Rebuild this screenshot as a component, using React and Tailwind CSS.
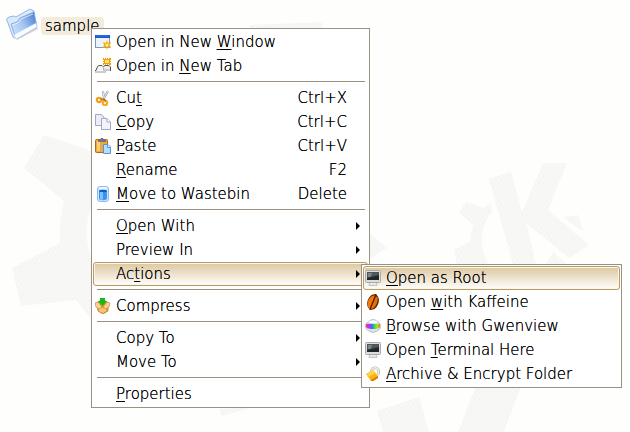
import React from "react";

const menuItems = [
  { label: "Open in New Window", key: 12, icon: WindowIcon },
  { label: "Open in New Tab", key: 8, icon: TabIcon },
  { separator: true },
  { label: "Cut", key: 2, icon: CutIcon, shortcut: "Ctrl+X" },
  { label: "Copy", key: 0, icon: CopyIcon, shortcut: "Ctrl+C" },
  { label: "Paste", key: 0, icon: PasteIcon, shortcut: "Ctrl+V" },
  { label: "Rename", key: 0, shortcut: "F2" },
  { label: "Move to Wastebin", key: 0, icon: WastebinIcon, shortcut: "Delete" },
  { separator: true },
  { label: "Open With", key: 0, submenu: true },
  { label: "Preview In", submenu: true },
  {
    label: "Actions",
    key: 2,
    submenu: true,
    active: true,
    items: [
      { label: "Open as Root", key: 0, icon: TerminalIcon, active: true },
      { label: "Open with Kaffeine", key: 5, icon: BeanIcon },
      { label: "Browse with Gwenview", key: 0, icon: GwenviewIcon },
      { label: "Open Terminal Here", key: 5, icon: TerminalIcon },
      { label: "Archive & Encrypt Folder", key: 0, icon: LockIcon },
    ],
  },
  { separator: true },
  { label: "Compress", icon: CompressIcon, submenu: true },
  { separator: true },
  { label: "Copy To", submenu: true },
  { label: "Move To", submenu: true },
  { separator: true },
  { label: "Properties", key: 0 },
];

function Label({ text, index }) {
  if (index === undefined) return <span>{text}</span>;
  return (
    <span>
      {text.slice(0, index)}
      <span className="underline decoration-1 underline-offset-2">{text[index]}</span>
      {text.slice(index + 1)}
    </span>
  );
}

function MenuItem({ item }) {
  if (item.separator) {
    return <li role="separator" className="h-2 pt-[3px] pl-1 pr-[3px]"><div className="h-px bg-[#9c9083]" /></li>;
  }
  const Icon = item.icon;
  return (
    <li className="relative">
      <button
        type="button"
        role="menuitem"
        className={
          item.active
            ? "flex h-6 w-full items-center rounded-[3px] border border-[#b89c64] bg-linear-to-b from-[#dcc7a0] to-[#fffefc] pl-px text-left shadow-[inset_0_0_0_1px_#fbf6ec] [text-shadow:0_0_0_#000]"
            : "flex h-6 w-full items-center border border-transparent pl-px text-left [text-shadow:0_0_0_#000]"
        }
      >
        <span className="mr-[5px] h-4 w-4 shrink-0">{Icon && <Icon />}</span>
        <span className="flex-1"><Label text={item.label} index={item.key} /></span>
        {item.shortcut && <span className="mr-5">{item.shortcut}</span>}
        {item.submenu && (
          <svg className="mr-[7px] h-2 w-1" viewBox="0 0 4 8" aria-hidden="true"><path d="M0 0 4 4 0 8Z" /></svg>
        )}
      </button>
      {item.items && <Menu items={item.items} className="absolute top-[2px] left-[268px] z-10 w-[261px]" />}
    </li>
  );
}

function Menu({ items, className }) {
  return (
    <ul role="menu" className={`border border-[#9c9083] bg-white p-px ${className}`}>
      {items.map((item, i) => <MenuItem key={i} item={item} />)}
    </ul>
  );
}

// faint gear artwork behind the icons
function Wallpaper() {
  return (
    <svg className="absolute top-0 left-0 h-[432px] w-[630px]" viewBox="0 0 630 432" aria-hidden="true">
      <defs>
        <pattern id="grain" width="8" height="8" patternUnits="userSpaceOnUse">
          <rect width="8" height="8" fill="#f6f6f5" />
          <path d="M1 1h1v1H1zM5 0h1v1H5zM3 4h1v1H3zM7 3h1v1H7zM0 6h1v1H0zM5 6h1v1H5z" fill="#fefefd" />
        </pattern>
      </defs>
      <g fill="url(#grain)">
        <path d="M44 135 95 152V200Q78 232 95 266V324L76 300 21 306 12 268 60 243Q59 222 64 201L24 168Z" />
        <path d="M250 25 322 22V30H250ZM368 232 387 248 368 260Z" />
        <path d="M489 179 511 172 522 212 543 163H567L548 210 589 245 569 258 526 223 537 268H514Z" />
        <path d="M466 202 484 208 490 203 492 211Q473 236 489 266H457L454 250 471 241Q470 232 474 226L459 213Z" />
        <path d="M563 217 578 215 583 230H580ZM553 252 569 266H545Z" />
        <path d="M219 409 222 416 254 407ZM377 411 419 397 429 432H383ZM476 386H521L504 432H458Z" />
      </g>
    </svg>
  );
}

function FolderIcon() {
  return (
    <svg className="h-8 w-8" viewBox="0 0 32 32" aria-hidden="true">
      <defs>
        <linearGradient id="folder" x1="0" y1=".8" x2="1" y2=".2">
          <stop stopColor="#cfe4fd" /><stop offset=".5" stopColor="#a3c6f2" /><stop offset="1" stopColor="#4f80d2" />
        </linearGradient>
      </defs>
      <path d="M11 32 32 21 30 17 10 28Z" fill="#999" opacity=".4" />
      <path d="M.5 11 3 9 8 8 10 9 24 1 28 3 28 6 9 30 7 29Z" fill="#d9eafd" stroke="#7fa4da" strokeWidth=".8" />
      <path d="M5 16 11 14 14 10 28 4 31 19 10 31Z" fill="url(#folder)" stroke="#7da3dc" strokeWidth=".8" />
      <path d="M8 27 30 15 31 19 10 31Z" fill="#f8fbff" />
      <path d="M6 17 12 15 15 11 27 6" fill="none" stroke="#eaf4ff" strokeWidth=".8" />
    </svg>
  );
}

function WindowIcon() {
  return (
    <svg viewBox="0 0 16 16" aria-hidden="true">
      <rect x=".5" y="1.5" width="14" height="12" fill="#eef2fa" stroke="#7f95c4" />
      <path d="M0 1h15v3H0z" fill="#1759d0" />
      <path d="M1 2h13" stroke="#4b8bf0" strokeWidth=".6" />
      <path d="m12 6 1 3 3-1-1 3 1 3-3-1-1 3-1-3-3 1 1-3-1-3 3 1Z" fill="#f5ae13" />
      <circle cx="12" cy="11" r="1.5" fill="#fff08a" />
    </svg>
  );
}

function TabIcon() {
  return (
    <svg viewBox="0 0 16 16" aria-hidden="true">
      <path d="M8 0h1v1h1V0h1v1h1V0h1v1h1V0h2v2h-1v1h1v1h-1v1h1v2h-2V6h-1v1h-1V6h-1v1h-1V6H9v1H8V5h1V4H8V3h1V2H8Z" fill="#f39c0b" />
      <path d="M10 2h4v3h-4z" fill="#ffe65c" />
      <path d="M0 12.500H1L2.500 8.500 4 7.500H7L9 9.500V12.500H16V11" fill="#f4f4f4" stroke="#555" />
      <path d="M8.500 8.500 10 7.500H14L15.500 9V12H9" fill="#eee" stroke="#555" />
      <path d="M0 13H9V11H15V13H11V15H0Z" fill="#ccc" />
    </svg>
  );
}

function CutIcon() {
  return (
    <svg viewBox="0 0 16 16" fill="none" aria-hidden="true">
      <path d="M8 1 9 9M13 1 8 10" stroke="#8d98aa" strokeWidth="2" />
      <path d="M8 1 9 8M13 1 9 8" stroke="#e3e8f0" />
      <circle cx="4" cy="10" r="2.200" stroke="#f0a020" strokeWidth="2.200" />
      <circle cx="10" cy="13" r="2.200" stroke="#f5ae2a" strokeWidth="2.200" />
      <path d="m6 9 4 1 1 1" stroke="#c16b09" strokeWidth="1.500" />
    </svg>
  );
}

function CopyIcon() {
  return (
    <svg viewBox="0 0 16 16" stroke="#a5a5c6" aria-hidden="true">
      <path d="M.5.5H6L9 3V11.500H.5Z" fill="#ececf6" />
      <path d="M6.500 4.500H12L15.500 8V15.500H6.500Z" fill="#f3f3fb" />
      <path d="M12 4.500V8H15.500" fill="#fff" />
    </svg>
  );
}

function PasteIcon() {
  return (
    <svg viewBox="0 0 16 16" aria-hidden="true">
      <rect x=".5" y="1.500" width="12" height="13" rx="1" fill="#efa63a" stroke="#b2690f" />
      <path d="M2 3H5V13H2Z" fill="#ffd07b" />
      <path d="M3 2H5L6 0H8L9 2H11V4H3Z" fill="#68758b" />
      <path d="M8.500 6.500H13L15.500 9V15.500H8.500Z" fill="#b5dcff" stroke="#5794d8" />
      <path d="M12.500 6.500V9.500H15.500" fill="#e9f6ff" stroke="#5794d8" />
    </svg>
  );
}

function WastebinIcon() {
  return (
    <svg viewBox="0 0 16 16" aria-hidden="true">
      <rect x="2.500" y=".5" width="11" height="15" rx="2.500" fill="#c9e8ff" stroke="#8dbce8" />
      <path d="M4 5H12V13Q8 15.500 4 13Z" fill="#3a92f2" />
      <ellipse cx="8" cy="5" rx="4" ry="1.200" fill="#1458c9" />
      <ellipse cx="8" cy="2" rx="4" ry="1" fill="#f3fbff" />
      <path d="M5 6H8V14L5 13Z" fill="#7cc2ff" />
    </svg>
  );
}

function CompressIcon() {
  return (
    <svg viewBox="0 0 16 16" aria-hidden="true">
      <path d="M2 5 4 3H11L13 5V13L8 16 3 13Z" fill="#e3a04a" stroke="#a9742d" strokeWidth=".7" />
      <path d="M0 5 3 4 7 9 4 11 1 9ZM15 5 12 4 8 9 11 11 14 9Z" fill="#ffd18a" stroke="#b57b30" strokeWidth=".6" />
      <path d="M4 11 7 10 11 11V13L8 15 4 13Z" fill="#ffc56d" />
      <path d="M5 0H10V3H12L7.500 8 3 3H5Z" fill="#16b817" />
    </svg>
  );
}

function TerminalIcon() {
  return (
    <svg viewBox="0 0 16 16" aria-hidden="true">
      <path d="M4 14 6 12H10L12 14V15.500H4Z" fill="#e8e8e8" stroke="#aaa" strokeWidth=".6" />
      <rect x=".5" y=".5" width="15" height="12" rx="1" fill="#ddd" stroke="#aaa" />
      <path d="M2 2H14V10H2Z" fill="#20282a" />
      <path d="M2 2H14V5L2 8Z" fill="#4d5759" />
      <path d="M3 4H7M3 6H6" stroke="#cdd4d4" strokeWidth=".7" />
    </svg>
  );
}

function BeanIcon() {
  return (
    <svg viewBox="0 0 16 16" aria-hidden="true">
      <ellipse cx="8" cy="8" rx="5.500" ry="8" fill="#622200" transform="rotate(20 8 8)" />
      <ellipse cx="7.500" cy="8" rx="4.500" ry="7" fill="#ee7a08" transform="rotate(22 7 8)" />
      <path d="M11 0Q9 6 8 8T5 16" fill="none" stroke="#5d2100" strokeWidth="1.500" />
      <path d="M12 3Q12 8 8 13" fill="none" stroke="#e36c08" strokeWidth="1.500" />
    </svg>
  );
}

function GwenviewIcon() {
  return (
    <svg viewBox="0 0 16 16" aria-hidden="true">
      <defs>
        <linearGradient id="spectrum">
          <stop stopColor="#ef3b8a" /><stop offset=".25" stopColor="#c02cf4" /><stop offset=".42" stopColor="#2f6fff" />
          <stop offset=".6" stopColor="#27dd55" /><stop offset=".8" stopColor="#a4ec23" /><stop offset="1" stopColor="#ff642b" />
        </linearGradient>
      </defs>
      <path d="M0 8Q1 5 3 4 8-1 13 4 15 5 16 8 15 12 12 13 8 16 4 13 1 12 0 8Z" fill="#dfe2e8" stroke="#a3a8b2" strokeWidth=".7" />
      <path d="M1 6Q8 5 15 6V9Q13 11 8 11T1 9Z" fill="url(#spectrum)" />
      <ellipse cx="8" cy="4" rx="4" ry="1.500" fill="#fff" />
    </svg>
  );
}

function LockIcon() {
  return (
    <svg viewBox="0 0 16 16" aria-hidden="true">
      <path d="M6 6Q7 1 11 2T13 9" fill="none" stroke="#b5b5b5" strokeWidth="2.800" />
      <path d="M6 6Q7 1 11 2T13 9" fill="none" stroke="#f0f0f0" strokeWidth="1.500" />
      <path d="M1 8 8 4 13 10 13 12 8 15 6 15Z" fill="#fbb314" />
      <path d="M1 8 8 4 11 7 3 11Z" fill="#ffd343" />
      <path d="M6 15 8 15 13 12 13 10 6 14Z" fill="#d97706" />
    </svg>
  );
}

export default function App() {
  return (
    <main className="relative min-h-screen overflow-hidden bg-[#fefefc] font-['DejaVu_Sans',sans-serif] text-[15px] leading-[18px] font-extralight text-black [text-shadow:0_0_0_#000]">
      <Wallpaper />
      <div className="relative flex items-end gap-[3px] pt-2 pl-[6px]">
        <FolderIcon />
        <span className="mb-[5px] rounded-[4px] bg-[#f3ecdd] px-1">sample</span>
      </div>
      <Menu items={menuItems} className="absolute top-[28px] left-[91px] w-[279px]" />
    </main>
  );
}
